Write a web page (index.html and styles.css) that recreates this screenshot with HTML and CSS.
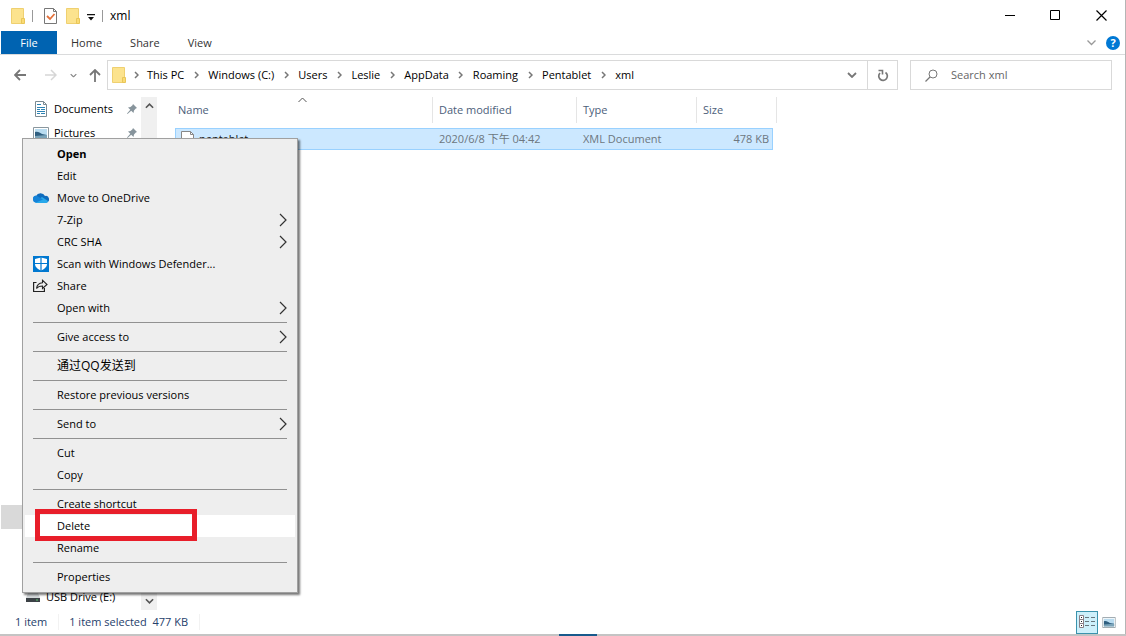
FILE: index.html
```html
<!DOCTYPE html>
<html lang="en">
<head>
<meta charset="utf-8">
<title>xml</title>
<link rel="stylesheet" href="styles.css">
</head>
<body>
<svg class="defs" aria-hidden="true">
  <symbol id="folder" viewBox="0 0 14 16"><path d="M.5.5h12v15H.5z" fill="#fce38e" stroke="#efd070"/><path d="M10.500 15.500v-5h3v5z" fill="#fadb74" stroke="#e9c658"/></symbol>
  <symbol id="crumb" viewBox="0 0 5 8"><path d="M1 1l3 3-3 3" fill="none" stroke="#777" stroke-width="1.500"/></symbol>
  <symbol id="down" viewBox="0 0 10 6"><path d="M1 1l4 4 4-4" fill="none" stroke="currentColor" stroke-width="1.800"/></symbol>
  <symbol id="right" viewBox="0 0 8 14"><path d="M1 1l6 6-6 6" fill="none" stroke="#333" stroke-width="1.200"/></symbol>
  <symbol id="pin" viewBox="0 0 10 10"><path d="M6 0l4 4-1.200.5L7 6.500 6.500 9 4.200 6.700.5 10 0 9.500 3.300 5.800 1 3.500 3.500 3l2-1.800z" fill="#87949c"/></symbol>
  <symbol id="picture" viewBox="0 0 16 13"><path d="M.5.5h15v12H.5z" fill="#fff" stroke="#8a979e"/><path d="M2 2h12v9H2z" fill="#b9dcf0"/><path d="M2 5c3-1 5 1 7 2l5 1v3H2z" fill="#2f5f80"/><path d="M2 9l12-1v3H2z" fill="#7aa3b8"/></symbol>
</svg>
<div class="window">
  <header class="titlebar">
    <svg class="folder"><use href="#folder"/></svg>
    <span class="rule"></span>
    <button class="plain" aria-label="Properties"><svg width="13" height="16" viewBox="0 0 13 16"><path d="M.5.5h9l3 3v12H.5z" fill="#fff" stroke="#777"/><path d="M9.500.5v3h3" fill="none" stroke="#777"/><path d="M3 8l3 3 4.500-5" fill="none" stroke="#e3703a" stroke-width="1.800"/></svg></button>
    <button class="plain new-folder" aria-label="New folder"><svg class="folder"><use href="#folder"/></svg></button>
    <button class="plain customize" aria-label="Customize toolbar"><svg width="8" height="7" viewBox="0 0 8 7"><path d="M0 0h8v1.200H0zM1 3h6L4 6.500z" fill="#111"/></svg></button>
    <span class="rule"></span>
    <h1 class="title">xml</h1>
    <div class="caption">
      <button class="plain minimize" aria-label="Minimize"><svg width="11" height="11" viewBox="0 0 11 11"><path d="M0 5.500h10" stroke="#000"/></svg></button>
      <button class="plain maximize" aria-label="Maximize"><svg width="11" height="11" viewBox="0 0 11 11"><path d="M.5.5h9v9h-9z" fill="none" stroke="#000"/></svg></button>
      <button class="plain close" aria-label="Close"><svg width="11" height="11" viewBox="0 0 11 11"><path d="M.5.5l10 10m0-10l-10 10" stroke="#000" stroke-width="1.200"/></svg></button>
    </div>
  </header>
  <nav class="tabs">
    <button class="tab file">File</button>
    <button class="tab">Home</button>
    <button class="tab">Share</button>
    <button class="tab">View</button>
    <div class="tab-tools">
      <button class="plain expand" aria-label="Expand ribbon"><svg width="9" height="6" viewBox="0 0 9 6"><path d="M.5.5l4 4 4-4" fill="none" stroke="#999" stroke-width="1.300"/></svg></button>
      <button class="help" aria-label="Help">?</button>
    </div>
  </nav>
  <div class="location">
    <div class="history">
      <button class="plain back" aria-label="Back"><svg width="13" height="12" viewBox="0 0 13 12"><path d="M6 1L1 6l5 5M1 6h11" fill="none" stroke="#777" stroke-width="1.800"/></svg></button>
      <button class="plain forward" aria-label="Forward"><svg width="13" height="12" viewBox="0 0 13 12"><path d="M7 1l5 5-5 5M12 6H1" fill="none" stroke="#d6d6d6" stroke-width="1.500"/></svg></button>
      <button class="plain recent" aria-label="Recent locations"><svg width="7" height="5" viewBox="0 0 10 6"><use href="#down"/></svg></button>
      <button class="plain up" aria-label="Up"><svg width="12" height="13" viewBox="0 0 12 13"><path d="M1 6l5-5 5 5M6 1v12" fill="none" stroke="#777" stroke-width="1.800"/></svg></button>
    </div>
    <div class="address">
      <svg class="folder"><use href="#folder"/></svg>
      <span class="sep"><svg><use href="#crumb"/></svg></span><a href="#">This PC</a>
      <span class="sep"><svg><use href="#crumb"/></svg></span><a href="#">Windows (C:)</a>
      <span class="sep"><svg><use href="#crumb"/></svg></span><a href="#">Users</a>
      <span class="sep"><svg><use href="#crumb"/></svg></span><a href="#">Leslie</a>
      <span class="sep"><svg><use href="#crumb"/></svg></span><a href="#">AppData</a>
      <span class="sep"><svg><use href="#crumb"/></svg></span><a href="#">Roaming</a>
      <span class="sep"><svg><use href="#crumb"/></svg></span><a href="#">Pentablet</a>
      <span class="sep"><svg><use href="#crumb"/></svg></span><a href="#">xml</a>
      <button class="plain previous" aria-label="Previous locations"><svg width="10" height="6"><use href="#down"/></svg></button>
      <button class="plain refresh" aria-label="Refresh"><svg width="12" height="13" viewBox="0 0 12 13"><path d="M8.500 3.500A4.300 4.300 0 1 1 3 4" fill="none" stroke="#777" stroke-width="1.700"/><path d="M1.500 1.500h4v4" fill="none" stroke="#777" stroke-width="1.600"/></svg></button>
    </div>
    <label class="search">
      <svg width="13" height="13" viewBox="0 0 13 13"><circle cx="8" cy="5" r="4" fill="none" stroke="#777"/><path d="M5 8L.5 12.500" stroke="#777" stroke-width="1.200"/></svg>
      <input type="search" placeholder="Search xml" aria-label="Search xml">
    </label>
  </div>
  <main class="content">
    <aside class="tree">
      <div class="places">
        <a href="#" class="place"><svg width="12" height="16" viewBox="0 0 12 16"><path d="M.5.5h8l3 3v12H.5z" fill="#fff" stroke="#7b8a92"/><path d="M8.500.5v3h3" fill="none" stroke="#7b8a92"/><path d="M2 3.500h4m-4 3h8m-8 2h3m1 0h4m-8 2h8m-8 2h3m1 0h4" stroke="#2d83b4"/></svg><span>Documents</span><svg class="pin"><use href="#pin"/></svg></a>
        <a href="#" class="place"><svg width="16" height="13"><use href="#picture"/></svg><span>Pictures</span><svg class="pin"><use href="#pin"/></svg></a>
        <div class="current"></div>
        <a href="#" class="place drive"><svg width="14" height="12" viewBox="0 0 14 12"><path d="M2 2h10l2 5H0z" fill="#d4d8da"/><path d="M0 7h14v4H0z" fill="#3c4246"/><path d="M10 9h2" stroke="#59c36a"/></svg><span>USB Drive (E:)</span></a>
      </div>
      <div class="scroll">
        <button class="plain" aria-label="Scroll up"><svg class="flip" width="9" height="6"><use href="#down"/></svg></button>
        <button class="plain" aria-label="Scroll down"><svg width="9" height="6"><use href="#down"/></svg></button>
      </div>
    </aside>
    <table class="files">
      <colgroup><col class="c-name"><col class="c-date"><col class="c-type"><col class="c-size"><col class="c-end"></colgroup>
      <thead><tr>
        <th><span>Name</span><svg class="sort" width="9" height="6" viewBox="0 0 9 6"><path d="M.5 5l4-4 4 4" fill="none" stroke="#555"/></svg></th>
        <th><span>Date modified</span></th>
        <th><span>Type</span></th>
        <th colspan="2"><span>Size</span></th>
      </tr></thead>
      <tbody><tr>
        <td class="name"><div><svg width="13" height="16" viewBox="0 0 13 16"><path d="M.5.5h9l3 3v12H.5z" fill="#fff" stroke="#888"/><path d="M9.500.5v3h3" fill="none" stroke="#888"/></svg>pentablet</div></td>
        <td>2020/6/8 下午 04:42</td>
        <td>XML Document</td>
        <td class="size">478 KB</td>
      </tr></tbody>
    </table>
  </main>
  <footer class="status">
    <span>1 item</span>
    <span>1 item selected&nbsp; 477 KB</span>
    <div class="views">
      <button class="view active" aria-label="Details"><svg width="16" height="14" viewBox="0 0 16 14"><path d="M.5.5h4v12h-4zM.5 4.500h4m-4 4h4" fill="#fff" stroke="#8a7f86"/><path d="M2 2.500h1m-1 4h1m-1 4h1" stroke="#222"/><path d="M6 2.500h4m2 0h4m-10 4h4m2 0h4m-10 4h4m2 0h4" stroke="#68777e"/></svg></button>
      <button class="view" aria-label="Large icons"><svg width="14" height="11" viewBox="0 0 16 13"><use href="#picture"/></svg></button>
    </div>
  </footer>
</div>
<div class="taskbar"><span></span></div>
<div class="menu" role="menu">
  <button class="item default" role="menuitem">Open</button>
  <button class="item" role="menuitem">Edit</button>
  <button class="item" role="menuitem"><svg class="icon" viewBox="0 0 16 16"><path d="M3 12.500a3.200 3.200 0 0 1 0-6.300A5 5 0 0 1 12 6a3.300 3.300 0 0 1 1.500 6.500z" fill="#0f6cbd"/><path d="M2 12l7-5 6 4a2 2 0 0 1-2 2H3z" fill="#28a8ea"/><path d="M0 9.500a3 3 0 0 1 5-3l5 3-7 3A3 3 0 0 1 0 9.500z" fill="#1483d8"/></svg>Move to OneDrive</button>
  <button class="item" role="menuitem">7-Zip<svg class="more"><use href="#right"/></svg></button>
  <button class="item" role="menuitem">CRC SHA<svg class="more"><use href="#right"/></svg></button>
  <button class="item" role="menuitem"><svg class="icon" viewBox="0 0 16 16"><path d="M0 0h16v16H0z" fill="#0078d0"/><path d="M8 1.500l6 1.500v5c0 3-3 5.500-6 6.500-3-1-6-3.500-6-6.500V3z" fill="#fff"/><path d="M8 1v14M2 7.500h12" stroke="#0078d0" stroke-width="1.200"/></svg>Scan with Windows Defender...</button>
  <button class="item" role="menuitem"><svg class="icon" viewBox="0 0 16 16"><path d="M3.500 4.500H.6v9h10.800V10" fill="none" stroke="#222" stroke-width="1.200"/><path d="M3.500 10.500C4 7 6 5 9.500 4.800V2.200L14 6.500l-4.500 4V8C7 8 5 8.500 3.500 10.500z" fill="none" stroke="#222" stroke-width="1.100"/></svg>Share</button>
  <button class="item" role="menuitem">Open with<svg class="more"><use href="#right"/></svg></button>
  <hr>
  <button class="item" role="menuitem">Give access to<svg class="more"><use href="#right"/></svg></button>
  <hr>
  <button class="item chinese" role="menuitem" lang="zh-Hans">通过QQ发送到</button>
  <hr>
  <button class="item" role="menuitem">Restore previous versions</button>
  <hr>
  <button class="item" role="menuitem">Send to<svg class="more"><use href="#right"/></svg></button>
  <hr>
  <button class="item" role="menuitem">Cut</button>
  <button class="item" role="menuitem">Copy</button>
  <hr>
  <button class="item" role="menuitem">Create shortcut</button>
  <button class="item hover" role="menuitem">Delete</button>
  <button class="item" role="menuitem">Rename</button>
  <hr>
  <button class="item" role="menuitem">Properties</button>
</div>
</body>
</html>
```

FILE: styles.css
```css
*, *::after { box-sizing: border-box; }
body {
  margin: 0;
  min-height: 100vh;
  display: flex;
  flex-direction: column;
  position: relative;
  background: #fff;
  color: #000;
  font: 11px/16px "Open Sans", "Noto Sans CJK TC", sans-serif;
}
button, input { font: inherit; color: inherit; }
a { color: inherit; text-decoration: none; }
svg { display: block; flex: none; }
.defs { position: absolute; width: 0; height: 0; }
.plain { border: 0; padding: 0; background: none; display: flex; align-items: center; justify-content: center; }
.folder { width: 14px; height: 16px; }

.window {
  flex: 1;
  display: flex;
  flex-direction: column;
  border-right: 1px solid #b5b5b5;
}

.titlebar { display: flex; align-items: center; height: 31px; padding-left: 11px; }
.rule { width: 1px; height: 12px; background: #999; margin: 0 11px 0 7px; }
.new-folder { margin: 0 7px 0 9px; }
.customize { padding-top: 3px; }
.customize + .rule { margin-right: 7px; }
.title { margin: 0; font-size: 12px; font-weight: 400; }
.caption { display: flex; margin-left: auto; }
.caption button { height: 31px; }
.minimize { width: 46px; }
.maximize { width: 44px; }
.close { width: 48px; }

.tabs { display: flex; height: 24px; border-bottom: 1px solid #dadbdc; padding-left: 1px; }
.tab { border: 0; background: none; padding: 0 14px; color: #333; }
.tab.file { background: #0063b1; color: #fff; width: 56px; }
.tab-tools { display: flex; align-items: center; gap: 10px; margin-left: auto; padding-right: 5px; }
.help {
  width: 14px; height: 14px; padding: 0; border: 0; border-radius: 50%;
  background: #0078d4; color: #fff; font-weight: 700; line-height: 14px;
}

.location { display: flex; gap: 12px; padding: 5px 13px 7px 14px; }
.history { display: flex; align-items: center; width: 81px; color: #888; }
.back { margin-right: 17px; }
.forward { margin-right: 13px; }
.recent { margin-right: 12px; }
.address { flex: 1; display: flex; align-items: center; height: 30px; border: 1px solid #d9d9d9; padding-left: 4px; }
.sep { width: 24px; display: flex; justify-content: center; }
.folder + .sep { width: 21px; }
.sep svg { width: 5px; height: 8px; }
.previous { margin-left: auto; width: 30px; height: 28px; color: #777; }
.refresh { width: 30px; height: 28px; border-left: 1px solid #d9d9d9; }
.search { width: 202px; display: flex; align-items: center; gap: 13px; border: 1px solid #d9d9d9; padding-left: 14px; }
.search input { flex: 1; min-width: 0; border: 0; outline: 0; padding: 0; background: none; }
.search input::placeholder { color: #666; opacity: 1; }

.content { flex: 1; display: flex; min-height: 0; }
.tree { width: 157px; display: flex; margin-right: 18px; }
.places { flex: 1; display: flex; flex-direction: column; }
.place { display: flex; align-items: center; gap: 5px; height: 24px; padding-left: 33px; }
.place:first-child { padding-left: 35px; gap: 7px; }
.pin { width: 10px; height: 10px; margin-left: auto; margin-right: 4px; }
.current { height: 24px; background: #d9d9d9; margin: auto 0 56px 1px; }
.place.drive { padding-left: 26px; gap: 6px; margin-bottom: 1px; }
.scroll { width: 16px; background: #f0f0f0; color: #555; display: flex; flex-direction: column; justify-content: space-between; }
.scroll button { height: 18px; }
.flip { transform: scaleY(-1); }

.files { border-collapse: separate; border-spacing: 0; table-layout: fixed; width: 602px; align-self: flex-start; }
.c-name { width: 258px; }
.c-date { width: 144px; }
.c-type { width: 120px; }
.c-size { width: 76px; }
.files th { position: relative; padding: 0 0 5px; font-weight: 400; text-align: left; color: #4c607a; }
.files th span { display: block; height: 26px; line-height: 26px; padding-left: 6px; border-right: 1px solid #e5e5e5; }
.files th:first-child span { padding-left: 3px; }
.sort { position: absolute; left: 123px; top: 0; }
.files td {
  height: 22px; padding: 0 0 0 6px; color: #6d7780;
  background: #cce8ff; border: solid #99d1ff; border-width: 1px 0;
}
.files td.name { padding-left: 5px; border-left-width: 1px; color: #111; }
.name div { display: flex; align-items: center; gap: 5px; height: 20px; }
.files td.size { text-align: right; padding: 0 3px 0 0; border-right-width: 1px; }

.status { display: flex; align-items: center; height: 24px; color: #26406b; }
.status span { padding: 0 11px 0 10px; border-right: 1px solid #f2f2f2; }
.status span:first-child { padding-left: 15px; }
.views { display: flex; margin-left: auto; padding-right: 5px; }
.view { display: flex; align-items: center; justify-content: center; width: 22px; height: 23px; border: 0; padding: 0; background: none; }
.view.active { background: #cdf0fb; border: 1px solid #3a93ad; }

.taskbar { height: 2px; background: #c4c4c4; padding-left: 559px; }
.taskbar span { display: block; width: 38px; height: 2px; background: #185a8c; }

.menu {
  position: absolute; left: 22px; top: 138px; width: 276px;
  padding: 4px 2px; border: 1px solid #a0a0a0; background: #eee;
  box-shadow: 2px 2px 2px #0008;
}
.item {
  position: relative; display: flex; align-items: center;
  width: 100%; height: 22px; border: 0; padding: 0 8px 0 32px;
  background: none; text-align: left; color: #000;
}
.default { font-weight: 700; }
.chinese { font-size: 12px; }
.icon { position: absolute; left: 8px; top: 3px; width: 16px; height: 16px; }
.more { width: 8px; height: 14px; margin-left: auto; }
.menu hr { height: 1px; border: 0; margin: 3px 8px; background: #919191; }
.hover { background: #fff; }
.hover::after {
  content: ""; position: absolute; left: 10px; top: -6px; z-index: 1;
  width: 162px; height: 32px; border: 5px solid #e81e2a;
}
```
